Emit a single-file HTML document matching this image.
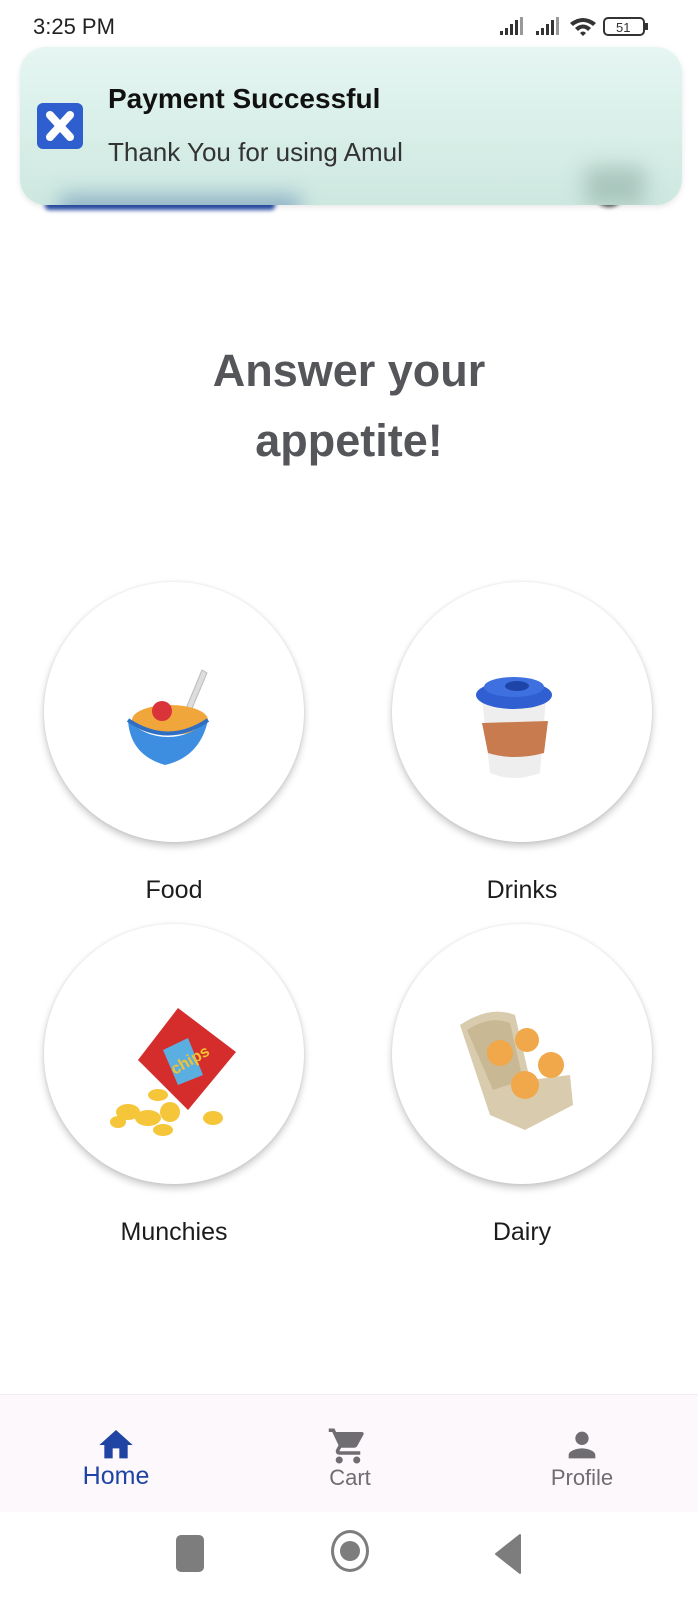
<!DOCTYPE html>
<html><head><meta charset="utf-8">
<style>
*{margin:0;padding:0;box-sizing:border-box}
body{width:698px;height:1600px;background:#fff;font-family:"Liberation Sans",sans-serif;position:relative;overflow:hidden}
.abs{position:absolute}
.circle{position:absolute;width:260px;height:260px;border-radius:50%;background:#fff;box-shadow:0 4px 8px rgba(0,0,0,.22),0 0 3px rgba(0,0,0,.08)}
.lbl{position:absolute;width:260px;text-align:center;font-size:25px;color:#1c1c1c}
</style></head><body>
<div class="abs" style="left:33px;top:14px;font-size:22px;color:#222">3:25 PM</div>
<svg class="abs" style="left:498px;top:14px" width="165" height="26" viewBox="0 0 165 26">
<g fill="#333"><rect x="2" y="17" width="3" height="4"/><rect x="7" y="14" width="3" height="7"/><rect x="12" y="10" width="3" height="11"/><rect x="17" y="6" width="3" height="15"/><rect x="22" y="3" width="3" height="18" fill="#999"/>
<rect x="38" y="17" width="3" height="4"/><rect x="43" y="14" width="3" height="7"/><rect x="48" y="10" width="3" height="11"/><rect x="53" y="6" width="3" height="15"/><rect x="58" y="3" width="3" height="18" fill="#999"/></g>
<path d="M72 9 Q85 -1 98 9 L95 12 Q85 4 75 12Z M77 14 Q85 7 93 14 L90 17 Q85 12 80 17Z M82 19 Q85 16 88 19 L85 22Z" fill="#333"/>
<rect x="106" y="4" width="40" height="17" rx="4" fill="none" stroke="#333" stroke-width="2"/><rect x="147" y="9" width="3" height="7" fill="#333"/>
<text x="118" y="18" font-size="13" fill="#333" font-family="Liberation Sans">51</text></svg>

<div class="abs" style="left:45px;top:188px;width:230px;height:22px;background:#2a4fa8;filter:blur(2px);border-radius:4px"></div>
<div class="abs" style="left:596px;top:185px;width:26px;height:22px;border-radius:50%;background:#444;filter:blur(2px)"></div>
<div class="abs" style="left:20px;top:47px;width:662px;height:158px;border-radius:26px;background:linear-gradient(180deg,#e6f6f2,#cde8e0);box-shadow:0 2px 6px rgba(0,0,0,.1);overflow:hidden">
 <div class="abs" style="left:40px;top:148px;width:240px;height:30px;background:#8fb2c6;filter:blur(10px)"></div>
 <div class="abs" style="left:565px;top:120px;width:60px;height:40px;background:#a9c6bd;filter:blur(10px)"></div>
 <div class="abs" style="left:17px;top:56px;width:46px;height:46px;border-radius:6px;background:#2f5fcf"></div>
 <svg class="abs" style="left:17px;top:56px" width="46" height="46"><path d="M13 12 L33 34 M33 12 L13 34" stroke="#fff" stroke-width="8" stroke-linecap="round"/></svg>
 <div class="abs" style="left:88px;top:36px;font-size:28px;font-weight:bold;color:#111">Payment Successful</div>
 <div class="abs" style="left:88px;top:90px;font-size:26px;color:#333">Thank You for using Amul</div>
</div>

<div class="abs" style="left:0;top:336px;width:698px;text-align:center;font-size:45px;font-weight:bold;color:#55565a;line-height:70px">Answer your<br>appetite!</div>

<div class="circle" style="left:44px;top:582px"></div>
<div class="circle" style="left:392px;top:582px"></div>
<div class="circle" style="left:44px;top:924px"></div>
<div class="circle" style="left:392px;top:924px"></div>
<div class="lbl" style="left:44px;top:876px">Food</div>
<div class="lbl" style="left:392px;top:876px">Drinks</div>
<div class="lbl" style="left:44px;top:1218px">Munchies</div>
<div class="lbl" style="left:392px;top:1218px">Dairy</div>

<svg class="abs" style="left:120px;top:665px" width="100" height="115">
<path d="M82 5 L87 8 L65 60 L60 58Z" fill="#ddd" stroke="#bbb"/>
<ellipse cx="50" cy="55" rx="38" ry="15" fill="#f0a63a"/>
<circle cx="42" cy="46" r="10" fill="#d8343a"/>
<path d="M8 55 Q10 90 45 100 Q80 92 88 55 Q70 72 48 72 Q25 72 8 55Z" fill="#3d8ee0"/>
<path d="M8 55 Q48 82 88 55" fill="none" stroke="#2e6fc4" stroke-width="4"/>
</svg>
<svg class="abs" style="left:470px;top:673px" width="90" height="115">
<path d="M12 25 L76 25 L70 100 Q44 110 20 100Z" fill="#eeeeee"/>
<path d="M12 50 L78 48 L74 80 Q44 88 18 80Z" fill="#c87b4e"/>
<ellipse cx="44" cy="22" rx="38" ry="14" fill="#2f5fd0"/>
<ellipse cx="44" cy="14" rx="30" ry="10" fill="#3e70e0"/>
<ellipse cx="47" cy="13" rx="12" ry="5" fill="#1e44a8"/>
</svg>
<svg class="abs" style="left:108px;top:1000px" width="140" height="145">
<path d="M30 60 L70 8 L128 52 L80 110Z" fill="#d52c2c"/>
<path d="M55 50 L80 38 L95 75 L70 85Z" fill="#5aaee0"/>
<text x="62" y="72" font-size="16" font-weight="bold" fill="#f4c230" transform="rotate(-30 70 65)">chips</text>
<g fill="#f5c53a"><ellipse cx="50" cy="95" rx="10" ry="6"/><ellipse cx="20" cy="112" rx="12" ry="8"/><ellipse cx="40" cy="118" rx="13" ry="8"/><ellipse cx="62" cy="112" rx="10" ry="10"/><ellipse cx="10" cy="122" rx="8" ry="6"/><ellipse cx="105" cy="118" rx="10" ry="7"/><ellipse cx="55" cy="130" rx="10" ry="6"/></g>
</svg>
<svg class="abs" style="left:455px;top:1005px" width="130" height="140">
<path d="M5 20 Q35 0 60 10 L75 75 L115 70 L118 100 L70 125 L35 110Z" fill="#d9ccae"/>
<path d="M12 25 Q35 10 55 18 L68 75 L38 85Z" fill="#c8b894"/>
<circle cx="72" cy="35" r="12" fill="#f0a84a"/><circle cx="45" cy="48" r="13" fill="#f0a84a"/>
<circle cx="96" cy="60" r="13" fill="#f0a84a"/><circle cx="70" cy="80" r="14" fill="#f0a84a"/>
</svg>

<div class="abs" style="left:0;top:1394px;width:698px;height:118px;background:#fdf8fc;border-top:1px solid #f1edf1"></div>
<svg class="abs" style="left:96px;top:1425px" width="40" height="40" viewBox="0 0 24 24"><path d="M10 20v-6h4v6h5v-8h3L12 3 2 12h3v8z" fill="#1f44a3"/></svg>
<div class="abs" style="left:56px;top:1462px;width:120px;text-align:center;font-size:25px;color:#1f44a3">Home</div>
<svg class="abs" style="left:327px;top:1425px" width="42" height="42" viewBox="0 0 24 24"><path d="M7 18c-1.1 0-2 .9-2 2s.9 2 2 2 2-.9 2-2-.9-2-2-2zM1 2v2h2l3.6 7.6-1.35 2.4c-.16.3-.25.6-.25 1 0 1.1.9 2 2 2h12v-2H7.4c-.14 0-.25-.11-.25-.25l.03-.12.9-1.630h7.45c.75 0 1.41-.41 1.750-1.03l3.58-6.490A1 1 0 0 0 20 4H5.2l-.94-2H1zm16 16c-1.1 0-2 .9-2 2s.9 2 2 2 2-.9 2-2-.9-2-2-2z" fill="#6f6d72"/></svg>
<div class="abs" style="left:290px;top:1465px;width:120px;text-align:center;font-size:22px;color:#6f6d72">Cart</div>
<svg class="abs" style="left:562px;top:1425px" width="40" height="40" viewBox="0 0 24 24"><path d="M12 12c2.2 0 4-1.8 4-4s-1.8-4-4-4-4 1.8-4 4 1.8 4 4 4zm0 2c-2.7 0-8 1.3-8 4v2h16v-2c0-2.7-5.3-4-8-4z" fill="#6f6d72"/></svg>
<div class="abs" style="left:522px;top:1465px;width:120px;text-align:center;font-size:22px;color:#6f6d72">Profile</div>

<div class="abs" style="left:176px;top:1535px;width:28px;height:37px;border-radius:5px;background:#7d7d7d"></div>
<div class="abs" style="left:331px;top:1530px;width:38px;height:42px;border-radius:50%;border:3px solid #7d7d7d"></div>
<div class="abs" style="left:340px;top:1541px;width:20px;height:20px;border-radius:50%;background:#7d7d7d"></div>
<svg class="abs" style="left:494px;top:1533px" width="28" height="42"><path d="M26 2 L26 40 L2 21Z" fill="#7d7d7d" stroke="#7d7d7d" stroke-linejoin="round" stroke-width="2"/></svg>
</body></html>
